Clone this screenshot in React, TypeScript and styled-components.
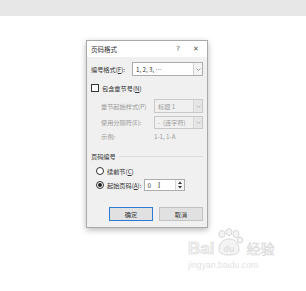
import styled, { createGlobalStyle } from 'styled-components';

const GlobalStyle = createGlobalStyle`
    html, body {
        margin: 0;
        padding: 0;
        background: #ffffff;
    }
    body {
        font-family: "Noto Sans CJK SC", "Noto Sans", sans-serif;
        color: #333;
        width: 306px;
        height: 291px;
        overflow: hidden;
        position: relative;
    }
`;

const TopBar = styled.div`
    height: 16px;
    background: #e7e7e7;
`;
const Stage = styled.div`
    padding: 24px 0 0 86px;
`;
const Dialog = styled.div`
    width: 120px;
    border: 1px solid #a9a9a9;
    box-shadow: 0 2px 6px rgba(0, 0, 0, 0.28);
    background: #f0f0f0;
`;
const TitleBar = styled.div`
    height: 16px;
    background: #ffffff;
    display: flex;
    align-items: center;
    padding: 0 0 0 4px;
    font-size: 6.5px;
`;
const Title = styled.span`
    flex: 1;
`;
const TitleBtn = styled.span<{ $w: number }>`
    width: ${p => p.$w}px;
    text-align: center;
    font-family: "DejaVu Sans", sans-serif;
    font-size: 7px;
    color: #555;
`;
const Body = styled.div`
    padding: 0 4px 6px 4px;
`;
const Row = styled.div<{ $top: number; $h: number; $indent?: number }>`
    display: flex;
    align-items: center;
    margin-top: ${p => p.$top}px;
    height: ${p => p.$h}px;
    padding-left: ${p => p.$indent || 0}px;
    font-size: 6.2px;
    white-space: nowrap;
`;
const Label = styled.span<{ $w?: number; $muted?: boolean }>`
    width: ${p => (p.$w ? p.$w + 'px' : 'auto')};
    color: ${p => (p.$muted ? '#9a9a9a' : '#333')};
    flex-shrink: 0;
`;
const Select = styled.div<{ $w: number; $disabled?: boolean }>`
    width: ${p => p.$w}px;
    height: 100%;
    box-sizing: border-box;
    border: 1px solid ${p => (p.$disabled ? '#c8c8c8' : '#adadad')};
    background: ${p => (p.$disabled ? '#f0f0f0' : '#ffffff')};
    color: ${p => (p.$disabled ? '#9a9a9a' : '#333')};
    display: flex;
    align-items: center;
    margin-left: auto;
`;
const SelectText = styled.span`
    flex: 1;
    padding-left: 3px;
`;
const Arrow = styled.span<{ $disabled?: boolean }>`
    width: 8px;
    height: 100%;
    border-left: 1px solid ${p => (p.$disabled ? '#d6d6d6' : '#d0d0d0')};
    background: ${p => (p.$disabled ? '#e6e6e6' : '#f4f4f4')};
    display: flex;
    align-items: center;
    justify-content: center;
`;
const Check = styled.span`
    width: 6px;
    height: 6px;
    border: 1px solid #333;
    background: #fff;
    margin-right: 3px;
`;
const Radio = styled.span<{ $on?: boolean }>`
    width: 6px;
    height: 6px;
    border: 1px solid #333;
    border-radius: 50%;
    background: #fff;
    margin-right: 3px;
    display: flex;
    align-items: center;
    justify-content: center;
    &::after {
        content: '';
        display: ${p => (p.$on ? 'block' : 'none')};
        width: 4px;
        height: 4px;
        border-radius: 50%;
        background: #222;
    }
`;
const Section = styled.div`
    flex: 1;
    height: 1px;
    background: #dcdcdc;
    margin-left: 3px;
`;
const Spin = styled.div`
    width: 41px;
    height: 100%;
    box-sizing: border-box;
    border: 1px solid #adadad;
    background: #fff;
    display: flex;
    margin-left: 3px;
`;
const SpinText = styled.span`
    flex: 1;
    padding-left: 2px;
    display: flex;
    align-items: center;
    gap: 7px;
`;
const Caret = styled.span`
    font-family: "Liberation Serif", serif;
    font-size: 8px;
    color: #555;
`;
const SpinBtns = styled.div`
    width: 8px;
    display: flex;
    flex-direction: column;
    border-left: 1px solid #d6d6d6;
`;
const SpinBtn = styled.span`
    flex: 1;
    display: flex;
    align-items: center;
    justify-content: center;
    background: #f4f4f4;
`;
const Buttons = styled.div`
    display: flex;
    justify-content: flex-end;
    gap: 6px;
    margin-top: 16px;
`;
const Button = styled.div<{ $primary?: boolean }>`
    width: 44px;
    height: 14px;
    box-sizing: border-box;
    border: 1px solid ${p => (p.$primary ? '#2b7bd6' : '#c2c2c2')};
    background: #e1e1e1;
    display: flex;
    align-items: center;
    justify-content: center;
    font-size: 6.2px;
    color: #333;
`;
const Watermark = styled.div`
    position: absolute;
    left: 188px;
    top: 228px;
    width: 92px;
    color: #e3e3e3;
`;
const MarkTop = styled.div`
    display: flex;
    align-items: flex-end;
    height: 28px;
`;
const Bai = styled.span`
    font-family: "Liberation Sans", sans-serif;
    font-weight: bold;
    font-size: 17px;
    line-height: 15px;
    -webkit-text-stroke: 0.6px #d8d8d8;
    color: #f2f2f2;
`;
const Jing = styled.span`
    font-size: 14px;
    line-height: 16px;
    margin-left: 2px;
    -webkit-text-stroke: 0.5px #d6d6d6;
    color: #f2f2f2;
`;
const Url = styled.div`
    font-family: "Liberation Sans", sans-serif;
    font-size: 8.5px;
    line-height: 10px;
    color: #e2e2e2;
    margin-top: 4px;
    letter-spacing: 0.1px;
`;

const DownArrow = ({ c }: { c: string }) => (
    <svg width="5" height="3" viewBox="0 0 5 3">
        <path d="M0.5 0.5 L2.5 2.5 L4.5 0.5" fill="none" stroke={c} strokeWidth="0.8" />
    </svg>
);

const Paw = () => (
    <svg width="30" height="28" viewBox="0 0 30 28">
        <g fill="#f4f4f4" stroke="#d8d8d8" strokeWidth="1">
            <ellipse cx="8" cy="6" rx="3" ry="3.6" />
            <ellipse cx="15" cy="4" rx="3" ry="3.4" />
            <ellipse cx="22" cy="6" rx="3" ry="3.6" />
            <ellipse cx="26" cy="12" rx="2.6" ry="3" />
            <path d="M5 22 C5 14 10 11 15 11 C20 11 25 14 25 22 C25 26 20 27 15 27 C10 27 5 26 5 22 Z" />
        </g>
        <text x="15" y="24" textAnchor="middle" fontFamily="Liberation Sans, sans-serif" fontWeight="bold" fontSize="9" fill="#e0e0e0">du</text>
    </svg>
);

export default function App() {
    return (
        <>
            <GlobalStyle />
            <TopBar />
            <Stage>
                <Dialog>
                    <TitleBar>
                        <Title>页码格式</Title>
                        <TitleBtn $w={14}>?</TitleBtn>
                        <TitleBtn $w={22}>✕</TitleBtn>
                    </TitleBar>
                    <Body>
                        <Row $top={5} $h={14}>
                            <Label>编号格式(<u>F</u>):</Label>
                            <Select $w={71}>
                                <SelectText>1, 2, 3, …</SelectText>
                                <Arrow><DownArrow c="#888" /></Arrow>
                            </Select>
                        </Row>
                        <Row $top={7} $h={10}>
                            <Check />
                            <Label>包含章节号(<u>N</u>)</Label>
                        </Row>
                        <Row $top={6} $h={14} $indent={10}>
                            <Label $muted>章节起始样式(P)</Label>
                            <Select $w={49} $disabled>
                                <SelectText>标题 1</SelectText>
                                <Arrow $disabled><DownArrow c="#aaa" /></Arrow>
                            </Select>
                        </Row>
                        <Row $top={3} $h={13} $indent={10}>
                            <Label $muted>使用分隔符(E):</Label>
                            <Select $w={49} $disabled>
                                <SelectText>-&nbsp;&nbsp;(连字符)</SelectText>
                                <Arrow $disabled><DownArrow c="#aaa" /></Arrow>
                            </Select>
                        </Row>
                        <Row $top={2} $h={10} $indent={10}>
                            <Label $muted $w={53}>示例:</Label>
                            <Label $muted>1-1, 1-A</Label>
                        </Row>
                        <Row $top={10} $h={10}>
                            <Label>页码编号</Label>
                            <Section />
                        </Row>
                        <Row $top={5} $h={10} $indent={5}>
                            <Radio />
                            <Label>续前节(<u>C</u>)</Label>
                        </Row>
                        <Row $top={3} $h={12} $indent={5}>
                            <Radio $on />
                            <Label>起始页码(<u>A</u>):</Label>
                            <Spin>
                                <SpinText>0 <Caret>I</Caret></SpinText>
                                <SpinBtns>
                                    <SpinBtn>
                                        <svg width="4" height="3" viewBox="0 0 4 3"><path d="M0 3 L2 0.5 L4 3 Z" fill="#333" /></svg>
                                    </SpinBtn>
                                    <SpinBtn>
                                        <svg width="4" height="3" viewBox="0 0 4 3"><path d="M0 0 L2 2.5 L4 0 Z" fill="#333" /></svg>
                                    </SpinBtn>
                                </SpinBtns>
                            </Spin>
                        </Row>
                        <Buttons>
                            <Button $primary>确定</Button>
                            <Button>取消</Button>
                        </Buttons>
                    </Body>
                </Dialog>
            </Stage>
            <Watermark>
                <MarkTop>
                    <Bai>Bai</Bai>
                    <Paw />
                    <Jing>经验</Jing>
                </MarkTop>
                <Url>jingyan.baidu.com</Url>
            </Watermark>
        </>
    );
}
